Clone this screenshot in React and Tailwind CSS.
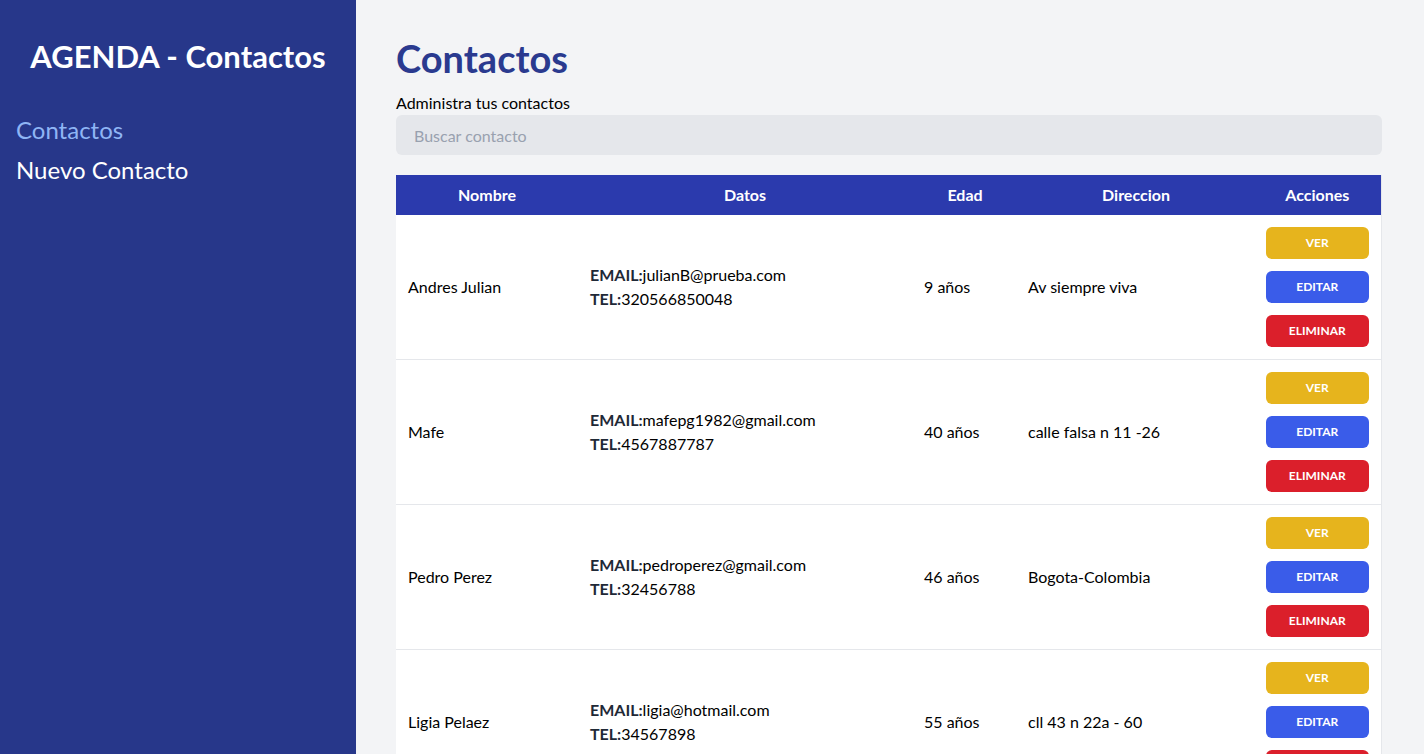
import React from "react";

const contacts = [
  { nombre: "Andres Julian", email: "julianB@prueba.com", tel: "320566850048", edad: 9, dir: "Av siempre viva" },
  { nombre: "Mafe", email: "mafepg1982@gmail.com", tel: "4567887787", edad: 40, dir: "calle falsa n 11 -26" },
  { nombre: "Pedro Perez", email: "pedroperez@gmail.com", tel: "32456788", edad: 46, dir: "Bogota-Colombia" },
  { nombre: "Ligia Pelaez", email: "ligia@hotmail.com", tel: "34567898", edad: 55, dir: "cll 43 n 22a - 60" },
];

const Sidebar = () => (
  <aside className="w-[356px] shrink-0 h-screen bg-[#27378a] text-white">
    <h1 className="pt-[36px] text-center text-[31px] leading-[40px] font-bold">AGENDA - Contactos</h1>
    <nav className="mt-[34px] px-4 flex flex-col">
      <a href="#" className="text-2xl leading-[40px] text-[#8fb5f5]">Contactos</a>
      <a href="#" className="text-2xl leading-[40px] text-white">Nuevo Contacto</a>
    </nav>
  </aside>
);

const Row = ({ c }) => (
  <tr className="border-b border-gray-200 bg-white text-black">
    <td className="px-3">{c.nombre}</td>
    <td className="px-3 text-[#1f2937]">
      <p><span className="font-bold">EMAIL:</span><span className="text-black">{c.email}</span></p>
      <p><span className="font-bold">TEL:</span><span className="text-black">{c.tel}</span></p>
    </td>
    <td className="px-3">{c.edad} años</td>
    <td className="px-2.5">{c.dir}</td>
    <td className="px-3 py-3">
      <div className="flex flex-col gap-3">
        <button className="h-8 rounded-md bg-[#e6b41d] text-white text-xs font-bold">VER</button>
        <button className="h-8 rounded-md bg-[#3a5ce9] text-white text-xs font-bold">EDITAR</button>
        <button className="h-8 rounded-md bg-[#db1f2b] text-white text-xs font-bold">ELIMINAR</button>
      </div>
    </td>
  </tr>
);

export default function App() {
  return (
    <div className="flex h-screen overflow-hidden bg-gray-100 font-['Lato',sans-serif]">
      <Sidebar />
      <main className="flex-1 pl-10 pr-[43px] pt-[34px]">
        <h2 className="text-[38px] leading-[48px] font-bold text-[#2a3a8f]">Contactos</h2>
        <p className="mt-[9px] leading-[24px] text-black">Administra tus contactos</p>
        <input
          placeholder="Buscar contacto"
          className="w-full h-10 rounded-md bg-gray-200 px-[18px] placeholder:text-gray-400 outline-none"
        />
        <table className="mt-5 w-full table-fixed border-r border-gray-200">
          <colgroup>
            <col className="w-[182px]" />
            <col className="w-[334px]" />
            <col className="w-[106px]" />
            <col className="w-[236px]" />
            <col className="w-[127px]" />
          </colgroup>
          <thead className="bg-[#2b3aad] text-white">
            <tr className="h-10">
              <th className="font-bold">Nombre</th>
              <th className="font-bold">Datos</th>
              <th className="font-bold">Edad</th>
              <th className="font-bold">Direccion</th>
              <th className="font-bold">Acciones</th>
            </tr>
          </thead>
          <tbody>
            {contacts.map((c) => (
              <Row key={c.nombre} c={c} />
            ))}
          </tbody>
        </table>
      </main>
    </div>
  );
}
